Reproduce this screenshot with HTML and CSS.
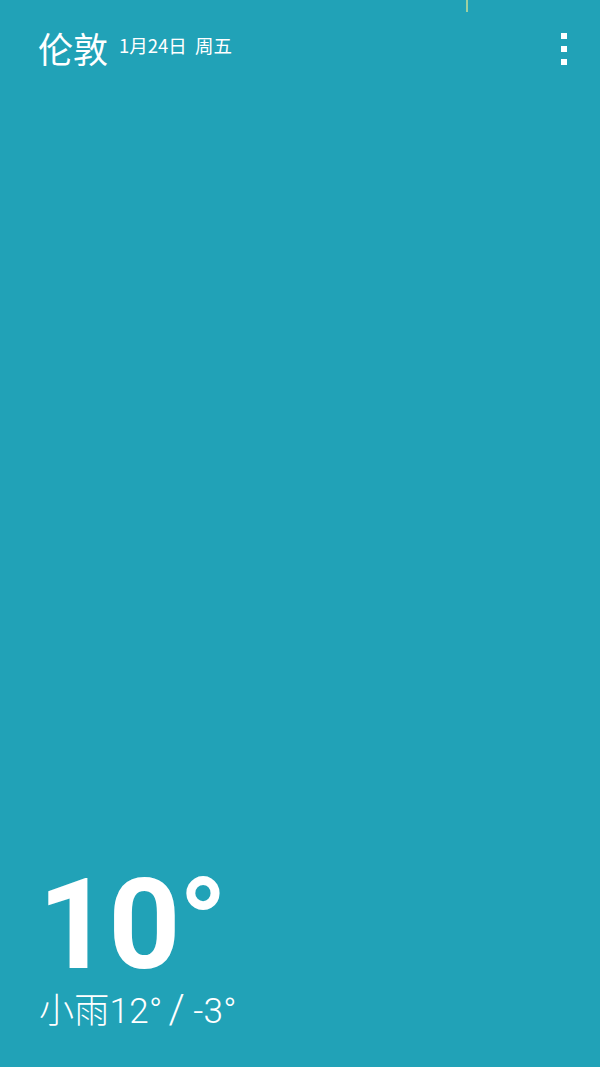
FILE: index.html
```html
<!DOCTYPE html>
<html lang="zh-CN">
<head>
<meta charset="utf-8">
<link rel="stylesheet" href="styles.css">
</head>
<body>
<div class="screen">
  <div class="marker"></div>
  <header class="topbar">
    <div class="place">
      <span class="city">伦敦</span>
      <span class="date">1月24日&nbsp;&nbsp;周五</span>
    </div>
    <div class="menu"><i></i><i></i><i></i></div>
  </header>
  <main class="spacer"></main>
  <section class="now">
    <div class="temp">10°</div>
    <div class="desc">小雨12°<span class="sep">/</span>-3°</div>
  </section>
</div>
</body>
</html>
```
FILE: styles.css
```css
html, body {
  margin: 0;
  padding: 0;
}
body {
  width: 600px;
  height: 1067px;
  overflow: hidden;
  background: #21a2b7;
  font-family: Roboto, "Noto Sans CJK SC", sans-serif;
  color: #ffffff;
}
.screen {
  position: relative;
  height: 1067px;
  display: flex;
  flex-direction: column;
}
.marker {
  position: absolute;
  left: 466px;
  top: 0;
  width: 2px;
  height: 12px;
  background: #9fd0a0;
}
.topbar {
  display: flex;
  justify-content: space-between;
  align-items: flex-start;
  padding: 22px 33px 0 38px;
}
.place {
  display: flex;
  align-items: center;
  gap: 11px;
}
.city {
  font-family: "Noto Sans CJK SC", sans-serif;
  font-size: 35px;
  line-height: 52px;
}
.date {
  font-family: "Noto Sans CJK SC", sans-serif;
  font-size: 18.5px;
  line-height: 24px;
  margin-bottom: 6px;
}
.menu {
  display: flex;
  flex-direction: column;
  gap: 7px;
  padding-top: 11px;
}
.menu i {
  display: block;
  width: 6px;
  height: 6px;
  background: #ffffff;
}
.spacer {
  flex: 1;
}
.now {
  padding: 0 0 32px 38px;
}
.temp {
  font-family: Roboto, sans-serif;
  font-weight: 700;
  font-size: 126px;
  line-height: 128px;
  letter-spacing: -2px;
}
.desc {
  font-family: Roboto, "Noto Sans CJK SC", sans-serif;
  font-weight: 300;
  font-size: 35px;
  line-height: 46px;
  margin-left: 1px;
  letter-spacing: 0.3px;
}
.sep {
  font-size: 41px;
  line-height: 0;
  padding: 0 8px 0 6px;
}
```
